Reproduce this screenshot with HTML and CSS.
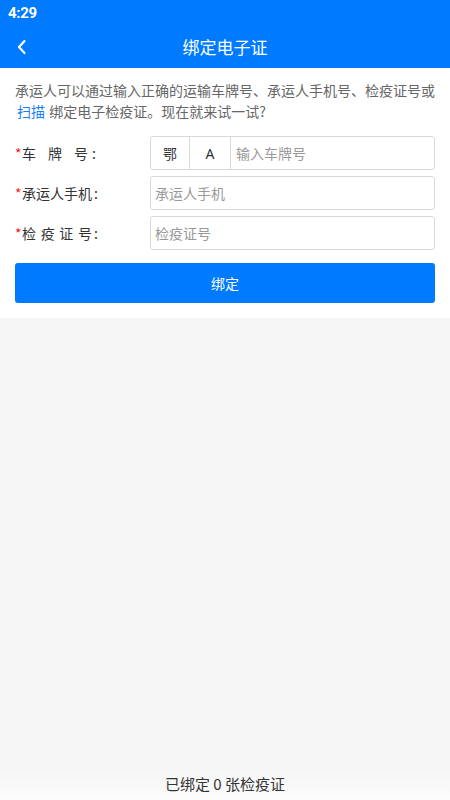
FILE: index.html
```html
<!DOCTYPE html>
<html lang="zh-CN">
<head>
<meta charset="utf-8">
<title>绑定电子证</title>
<link rel="stylesheet" href="styles.css">
</head>
<body>
<div class="app">
  <header class="topbar">
    <div class="status"><span class="time">4:29</span></div>
    <div class="nav">
      <span class="back">
        <svg width="12" height="16" viewBox="0 0 12 16"><path d="M8.5 2 L3 8 L8.5 14" fill="none" stroke="#fff" stroke-width="2.2" stroke-linecap="round" stroke-linejoin="round"/></svg>
      </span>
      <span class="title">绑定电子证</span>
    </div>
  </header>
  <main class="panel">
    <p class="desc">承运人可以通过输入正确的运输车牌号、承运人手机号、检疫证号或<span class="link">扫描</span> 绑定电子检疫证。现在就来试一试?</p>
    <div class="rows">
      <div class="row">
        <label class="label"><span class="star">*</span><span class="ltext short">车牌号</span><span class="colon">:</span></label>
        <div class="field plate">
          <span class="cell prov">鄂</span>
          <span class="cell letter">A</span>
          <span class="ph">输入车牌号</span>
        </div>
      </div>
      <div class="row">
        <label class="label"><span class="star">*</span><span class="ltext">承运人手机</span><span class="colon">:</span></label>
        <div class="field"><span class="ph">承运人手机</span></div>
      </div>
      <div class="row">
        <label class="label"><span class="star">*</span><span class="ltext">检疫证号</span><span class="colon">:</span></label>
        <div class="field"><span class="ph">检疫证号</span></div>
      </div>
    </div>
    <div class="btn">绑定</div>
  </main>
  <div class="spacer"></div>
  <footer class="footer">已绑定 0 张检疫证</footer>
</div>
</body>
</html>
```
FILE: styles.css
```css
html, body {
  margin: 0;
  padding: 0;
}
body {
  background: #f5f5f5;
  font-family: "Noto Sans CJK SC", "Noto Sans", sans-serif;
}
.app {
  display: flex;
  flex-direction: column;
  height: 800px;
}
.topbar {
  background: #007aff;
  color: #fff;
}
.status {
  height: 25px;
  display: flex;
  align-items: center;
  padding-left: 8px;
}
.time {
  font-family: Roboto, "Liberation Sans", sans-serif;
  font-weight: 700;
  font-size: 15px;
  letter-spacing: -0.3px;
}
.nav {
  height: 43px;
  display: flex;
  align-items: center;
  justify-content: center;
  position: relative;
}
.back {
  position: absolute;
  left: 16px;
  top: 14px;
  display: flex;
}
.title {
  font-size: 17px;
  line-height: 1;
}
.panel {
  background: #fff;
  padding: 12px 15px 15px;
}
.desc {
  margin: 0;
  font-size: 14px;
  line-height: 21px;
  color: #666;
}
.link {
  color: #1a7ff5;
  padding-left: 2px;
  padding-right: 1px;
}
.rows {
  margin-top: 14px;
  display: flex;
  flex-direction: column;
  gap: 6px;
}
.row {
  display: flex;
  align-items: center;
}
.label {
  width: 135px;
  display: flex;
  align-items: center;
  font-size: 14px;
  color: #333;
}
.star {
  color: #f21c1c;
  width: 7px;
}
.ltext {
  width: 70px;
  text-align: justify;
  text-align-last: justify;
}
.ltext.short {
  width: 66px;
}
.colon {
  padding-left: 2px;
}
.short + .colon {
  padding-left: 4px;
}
.field {
  flex: 1;
  height: 34px;
  box-sizing: border-box;
  border: 1px solid #d9d9d9;
  border-radius: 3px;
  display: flex;
  align-items: center;
  font-size: 14px;
}
.ph {
  color: #999;
  padding-left: 4px;
}
.plate .ph {
  padding-left: 5px;
}
.cell {
  height: 100%;
  display: flex;
  align-items: center;
  justify-content: center;
  border-right: 1px solid #d9d9d9;
  color: #333;
}
.prov {
  width: 38px;
}
.letter {
  width: 40px;
  font-family: "Noto Sans", sans-serif;
}
.btn {
  margin-top: 13px;
  height: 40px;
  background: #007aff;
  border-radius: 3px;
  color: #fff;
  font-size: 14px;
  display: flex;
  align-items: center;
  justify-content: center;
}
.spacer {
  flex: 1;
}
.footer {
  height: 33px;
  display: flex;
  align-items: center;
  justify-content: center;
  font-size: 15px;
  color: #333;
  background: linear-gradient(#f5f5f5, #fcfcfc);
}
```
